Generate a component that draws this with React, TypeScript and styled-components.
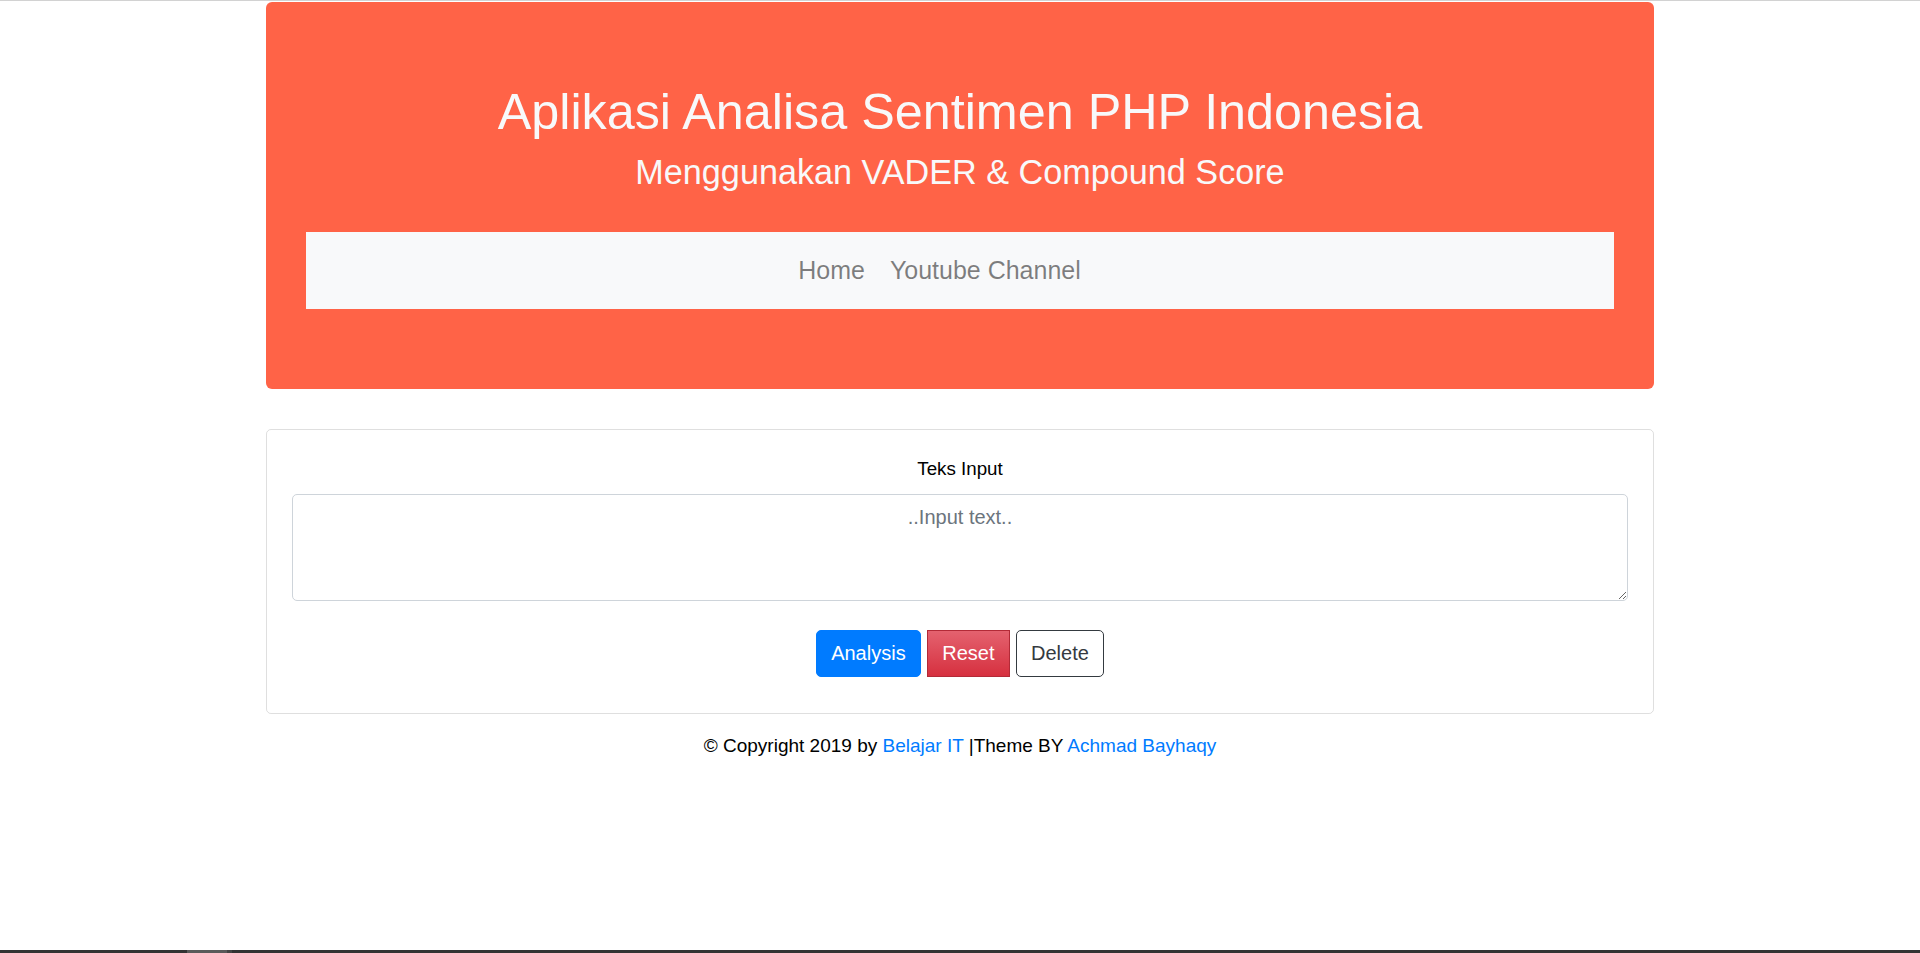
import React from "react";
import styled, { createGlobalStyle } from "styled-components";

const GlobalStyle = createGlobalStyle`
  html, body {
    margin: 0;
    padding: 0;
    background: #ffffff;
  }
  body {
    font-family: "Liberation Sans", Arial, Helvetica, sans-serif;
    font-size: 20px;
    line-height: 1.5;
    color: #212529;
  }
  * { box-sizing: border-box; }
`;

const Page = styled.div`
  min-height: 953px;
  display: flex;
  flex-direction: column;
`;

const TopRule = styled.div`
  height: 1px;
  background: #d2d2d2;
  margin-bottom: 1px;
`;

const Container = styled.div`
  width: 1388px;
  margin: 0 auto;
`;

const Jumbotron = styled.header`
  background: #ff6347;
  border-radius: 6px;
  padding: 80px 40px;
  text-align: center;
  color: #f8f9fa;
`;

const Title = styled.h1`
  font-size: 50.3px;
  font-weight: 400;
  line-height: 1.2;
  margin: 0 0 10px;
`;

const Subtitle = styled.h3`
  font-size: 34.2px;
  font-weight: 400;
  line-height: 1.2;
  margin: 0 0 39px;
`;

const Navbar = styled.nav`
  background: #f8f9fa;
  height: 77px;
  display: flex;
  justify-content: center;
  align-items: center;
  padding-right: 41px;
`;

const NavLink = styled.a`
  color: rgba(0, 0, 0, 0.5);
  font-size: 25px;
  line-height: 1.5;
  padding: 0 12.5px;
  text-decoration: none;
`;

const Card = styled.section`
  margin-top: 40px;
  border: 1.25px solid rgba(0, 0, 0, 0.125);
  border-radius: 5px;
  padding: 25px 25px 27px;
  text-align: center;
`;

const Label = styled.label`
  display: block;
  font-size: 18.75px;
  line-height: 1.5;
  margin-bottom: 10px;
  color: #000;
`;

const TextArea = styled.textarea`
  display: block;
  width: 100%;
  height: 107px;
  padding: 7.5px 15px;
  border: 1.25px solid #ced4da;
  border-radius: 5px;
  font-family: "Liberation Sans", Arial, Helvetica, sans-serif;
  font-size: 20px;
  line-height: 1.5;
  color: #495057;
  text-align: center;
  margin: 0 0 20px;
  &::placeholder {
    color: #6c757d;
    opacity: 1;
  }
`;

const ButtonRow = styled.div`
  padding: 9px 0;
  text-align: center;
`;

const Button = styled.button<{ $variant: "primary" | "danger" | "outline" }>`
  display: inline-block;
  font-family: "Liberation Sans", Arial, Helvetica, sans-serif;
  font-size: 20px;
  line-height: 1.5;
  padding: 7.5px 14.5px;
  margin: 0;
  border: 1.25px solid transparent;
  border-radius: 5px;
  vertical-align: middle;
  cursor: pointer;
  ${({ $variant }) =>
    $variant === "primary"
      ? `background: #007bff; border-color: #007bff; color: #fff;`
      : $variant === "danger"
      ? `background: linear-gradient(#e4626f, #d6303f); border-color: #b32a37; color: #fff; border-radius: 0;`
      : `background: #fff; border-color: #343a40; color: #343a40;`}
`;

const Footer = styled.footer`
  margin-top: 18px;
  text-align: center;
  font-size: 19px;
  line-height: 1.5;
  color: #000;
`;

const Link = styled.a`
  color: #007bff;
  text-decoration: none;
`;

const BottomStrip = styled.div`
  position: fixed;
  left: 0;
  right: 0;
  bottom: 0;
  height: 3px;
  background: #333333;
  display: flex;
`;

const StripSegment = styled.div<{ $w: number; $c: string }>`
  width: ${({ $w }) => $w}px;
  background: ${({ $c }) => $c};
`;

export default function App() {
  return (
    <>
      <GlobalStyle />
      <Page>
        <TopRule />
        <Container>
          <Jumbotron>
            <Title>Aplikasi Analisa Sentimen PHP Indonesia</Title>
            <Subtitle>Menggunakan VADER &amp; Compound Score</Subtitle>
            <Navbar>
              <NavLink href="#">Home</NavLink>
              <NavLink href="#">Youtube Channel</NavLink>
            </Navbar>
          </Jumbotron>
          <Card>
            <Label htmlFor="teks">Teks Input</Label>
            <TextArea id="teks" rows={3} placeholder="..Input text.." />
            <ButtonRow>
              <Button $variant="primary">Analysis</Button>{" "}
              <Button $variant="danger">Reset</Button>{" "}
              <Button $variant="outline">Delete</Button>
            </ButtonRow>
          </Card>
          <Footer>
            © Copyright 2019 by <Link href="#">Belajar IT</Link> |Theme BY{" "}
            <Link href="#">Achmad Bayhaqy</Link>
          </Footer>
        </Container>
      </Page>
      <BottomStrip>
        <StripSegment $w={187} $c="#333333" />
        <StripSegment $w={40} $c="#5a5a5a" />
        <StripSegment $w={5} $c="#444444" />
      </BottomStrip>
    </>
  );
}
